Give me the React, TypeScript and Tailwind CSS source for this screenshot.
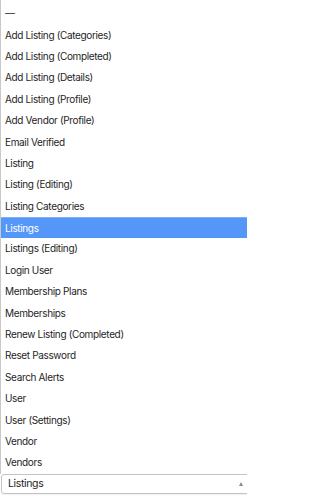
import React from "react";

const items = [
  "—",
  "Add Listing (Categories)",
  "Add Listing (Completed)",
  "Add Listing (Details)",
  "Add Listing (Profile)",
  "Add Vendor (Profile)",
  "Email Verified",
  "Listing",
  "Listing (Editing)",
  "Listing Categories",
  "Listings",
  "Listings (Editing)",
  "Login User",
  "Membership Plans",
  "Memberships",
  "Renew Listing (Completed)",
  "Reset Password",
  "Search Alerts",
  "User",
  "User (Settings)",
  "Vendor",
  "Vendors",
];

export default function App() {
  return (
    <div
      className="w-[247px] h-[500px] bg-white overflow-hidden text-[#1e1e1e] text-[10px] tracking-[-0.035em]"
      style={{ fontFamily: "Inter, 'Noto Sans', sans-serif" }}
    >
      <div className="border-l border-[#c9c9c9] pt-[3px]">
        {items.map((t) => {
          const sel = t === "Listings";
          return (
            <div
              key={t}
              className={
                sel
                  ? "h-[21.4px] flex items-center pl-[4px] bg-[#5597f8] text-white border-t border-[#7cb0fa]"
                  : "h-[21.4px] flex items-center pl-[4px]"
              }
            >
              {t}
            </div>
          );
        })}
      </div>
      <div className="ml-[1px] w-[270px] h-[20px] border border-[#c4c4c4] rounded-[3px] flex items-center pl-[6px] relative text-[10.5px] shadow-[0_1px_1px_rgba(0,0,0,0.06)]">
        Listings
        <span className="absolute left-[237px] top-[7px] w-0 h-0 border-l-[2.5px] border-r-[2.5px] border-b-[4px] border-l-transparent border-r-transparent border-b-[#8a8a8a]" />
      </div>
    </div>
  );
}
